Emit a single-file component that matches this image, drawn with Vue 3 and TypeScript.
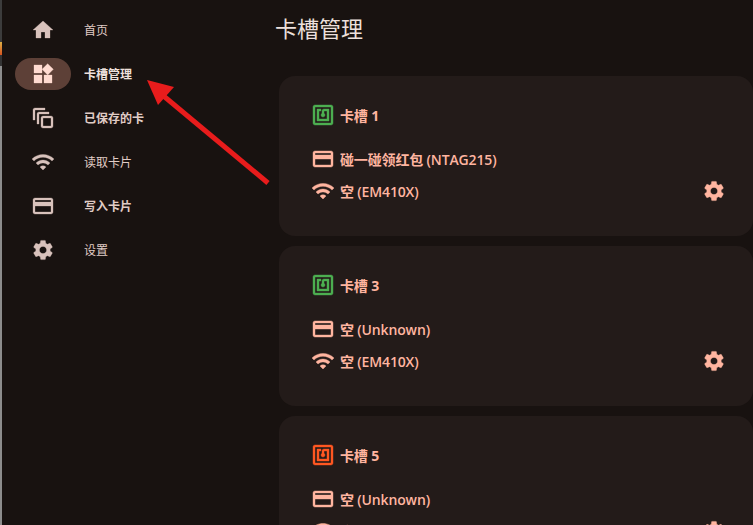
<template>
  <div class="page">
    <div class="edge">
      <div class="edge-top"></div>
      <div class="edge-pic"></div>
      <div class="edge-gap"></div>
      <div class="edge-bottom"></div>
    </div>
    <nav class="rail">
      <div v-for="item in nav" :key="item.label" class="nav-item" :class="{ active: item.active, heavy: item.heavy }">
        <div class="pill">
          <svg class="nav-icon" viewBox="0 0 24 24"><path :d="item.icon" /></svg>
        </div>
        <span class="nav-label">{{ item.label }}</span>
      </div>
    </nav>
    <main class="content">
      <h1 class="title">卡槽管理</h1>
      <section v-for="slot in slots" :key="slot.name" class="card">
        <div class="card-head">
          <svg class="nfc" :style="{ fill: slot.color, stroke: slot.color }" viewBox="0 0 24 24"><path :d="icons.nfc" /></svg>
          <span>{{ slot.name }}</span>
        </div>
        <div class="row">
          <svg class="row-icon" viewBox="0 0 24 24"><path :d="icons.card" /></svg>
          <span>{{ slot.hf }}</span>
        </div>
        <div class="row">
          <svg class="row-icon" viewBox="0 0 24 24"><path :d="icons.wifi" /></svg>
          <span>{{ slot.lf }}</span>
          <svg class="row-icon gear" viewBox="0 0 24 24"><path :d="icons.gear" /></svg>
        </div>
      </section>
    </main>
    <svg class="arrow" viewBox="0 0 753 525">
      <line x1="268" y1="183" x2="160" y2="93" />
      <polygon points="147,80 174,87 158,105" />
    </svg>
  </div>
</template>

<script setup lang="ts">
const icons = {
  home: 'M10 20v-6h4v6h5v-8h3L12 3 2 12h3v8z',
  widgets: 'M13 13v8h8v-8h-8zM3 21h8v-8H3v8zM3 3v8h8V3H3zm13.66-1.31L11 7.34 16.66 13l5.66-5.66-5.66-5.65z',
  motion: 'M14 2H4c-1.1 0-2 .9-2 2v10h2V4h10V2zm4 4H8c-1.1 0-2 .9-2 2v10h2V8h10V6zm2 4h-8c-1.1 0-2 .9-2 2v8c0 1.1.9 2 2 2h8c1.1 0 2-.9 2-2v-8c0-1.1-.9-2-2-2zm0 10h-8v-8h8v8z',
  wifi: 'M1 9l2 2c4.97-4.97 13.03-4.97 18 0l2-2C16.93 2.93 7.08 2.93 1 9zm8 8l3 3 3-3c-1.65-1.66-4.34-1.66-6 0zm-4-4l2 2c2.76-2.76 7.24-2.76 10 0l2-2C15.14 9.14 8.87 9.14 5 13z',
  card: 'M20 4H4c-1.11 0-1.99.89-1.99 2L2 18c0 1.11.89 2 2 2h16c1.11 0 2-.89 2-2V6c0-1.11-.89-2-2-2zm0 14H4v-6h16v6zm0-10H4V6h16v2z',
  gear: 'M19.14 12.94c.04-.3.06-.61.06-.94 0-.32-.02-.64-.07-.94l2.03-1.58c.18-.14.23-.41.12-.61l-1.92-3.32c-.12-.22-.37-.29-.59-.22l-2.39.96c-.5-.38-1.03-.7-1.62-.94l-.36-2.54c-.04-.24-.24-.41-.48-.41h-3.84c-.24 0-.43.17-.47.41l-.36 2.54c-.59.24-1.13.57-1.62.94l-2.39-.96c-.22-.08-.47 0-.59.22L2.74 8.87c-.12.21-.08.47.12.61l2.03 1.58c-.05.3-.09.63-.09.94s.02.64.07.94l-2.03 1.58c-.18.14-.23.41-.12.61l1.92 3.32c.12.22.37.29.59.22l2.39-.96c.5.38 1.03.7 1.62.94l.36 2.54c.05.24.24.41.48.41h3.84c.24 0 .44-.17.47-.41l.36-2.54c.59-.24 1.13-.56 1.62-.94l2.39.96c.22.08.47 0 .59-.22l1.92-3.32c.12-.22.07-.47-.12-.61l-2.01-1.58zM12 15.6c-1.98 0-3.6-1.62-3.6-3.6s1.62-3.6 3.6-3.6 3.6 1.62 3.6 3.6-1.62 3.6-3.6 3.6z',
  nfc: 'M20 2H4c-1.1 0-2 .9-2 2v16c0 1.1.9 2 2 2h16c1.1 0 2-.9 2-2V4c0-1.1-.9-2-2-2zm0 18H4V4h16v16zM18 6h-5c-1.1 0-2 .9-2 2v2.28c-.6.35-1 .98-1 1.72 0 1.1.9 2 2 2s2-.9 2-2c0-.74-.4-1.38-1-1.72V8h3v8H8V8h2V6H6v12h12V6z'
}

const nav = [
  { label: '首页', icon: icons.home, active: false, heavy: false },
  { label: '卡槽管理', icon: icons.widgets, active: true, heavy: true },
  { label: '已保存的卡', icon: icons.motion, active: false, heavy: true },
  { label: '读取卡片', icon: icons.wifi, active: false, heavy: false },
  { label: '写入卡片', icon: icons.card, active: false, heavy: true },
  { label: '设置', icon: icons.gear, active: false, heavy: false }
]

const slots = [
  { name: '卡槽 1', color: '#4caf50', hf: '碰一碰领红包 (NTAG215)', lf: '空 (EM410X)' },
  { name: '卡槽 3', color: '#4caf50', hf: '空 (Unknown)', lf: '空 (EM410X)' },
  { name: '卡槽 5', color: '#ff5722', hf: '空 (Unknown)', lf: '空 (EM410X)' }
]
</script>

<style>
html,
body {
  margin: 0;
  height: 100%;
  overflow: hidden;
  background: #181210;
}
</style>

<style scoped>
.page {
  position: relative;
  display: flex;
  width: 753px;
  height: 525px;
  overflow: hidden;
  background: #181210;
  color: #ede0dc;
  font-family: "Open Sans", "Noto Sans CJK SC", sans-serif;
}
.edge {
  width: 2px;
  flex: none;
  display: flex;
  flex-direction: column;
}
.edge-top {
  height: 42px;
  background: #3c3c3c;
}
.edge-pic {
  height: 13px;
  background: linear-gradient(#dcae45, #d8541f);
}
.edge-gap {
  height: 11px;
  background: #333;
}
.edge-bottom {
  flex: 1;
  background: #8c8c8c;
}
.rail {
  width: 80px;
  flex: none;
  padding-top: 14px;
  display: flex;
  flex-direction: column;
  gap: 12px;
}
.nav-item {
  height: 32px;
  display: flex;
  align-items: center;
  width: 160px;
  padding-left: 13px;
  font-size: 12px;
}
.pill {
  width: 56px;
  height: 32px;
  flex: none;
  border-radius: 16px;
  display: flex;
  align-items: center;
  justify-content: center;
}
.nav-icon {
  width: 24px;
  height: 24px;
  fill: #d8c2bc;
  stroke: #d8c2bc;
  stroke-width: 0.3;
}
.nav-label {
  margin-left: 13px;
  white-space: nowrap;
  color: #e0ccc6;
}
.heavy .nav-label {
  font-weight: 700;
}
.active .pill {
  background: #5d4037;
}
.active .nav-icon {
  fill: #ffdbd1;
  stroke: #ffdbd1;
}
.active .nav-label {
  color: #ede0dc;
}
.content {
  flex: 1;
  min-width: 0;
  margin-left: 197px;
}
.title {
  margin: 14px 0 34px -4px;
  font-size: 22px;
  line-height: 28px;
  font-weight: 400;
  color: #ede0dc;
}
.card {
  box-sizing: border-box;
  height: 160px;
  margin-bottom: 10px;
  padding: 23px 27px 0 34px;
  border-radius: 16px;
  background: #231b19;
  color: #ffb5a0;
  font-size: 14px;
  font-weight: 600;
  letter-spacing: -0.15px;
}
.card-head,
.row {
  display: flex;
  align-items: center;
  gap: 5px;
}
.card-head {
  height: 32px;
  margin-bottom: 12px;
  font-weight: 700;
}
.row {
  height: 32px;
}
.nfc {
  width: 24px;
  height: 24px;
  margin-left: -2px;
  stroke-width: 0.4;
}
.row-icon {
  width: 24px;
  height: 24px;
  margin-left: -2px;
  fill: #ffb5a0;
  stroke: #ffb5a0;
  stroke-width: 0.4;
}
.gear {
  margin-left: auto;
}
.arrow {
  position: absolute;
  inset: 0;
  width: 753px;
  height: 525px;
  pointer-events: none;
}
.arrow line {
  stroke: #e81c1c;
  stroke-width: 5;
}
.arrow polygon {
  fill: #e81c1c;
}
</style>
